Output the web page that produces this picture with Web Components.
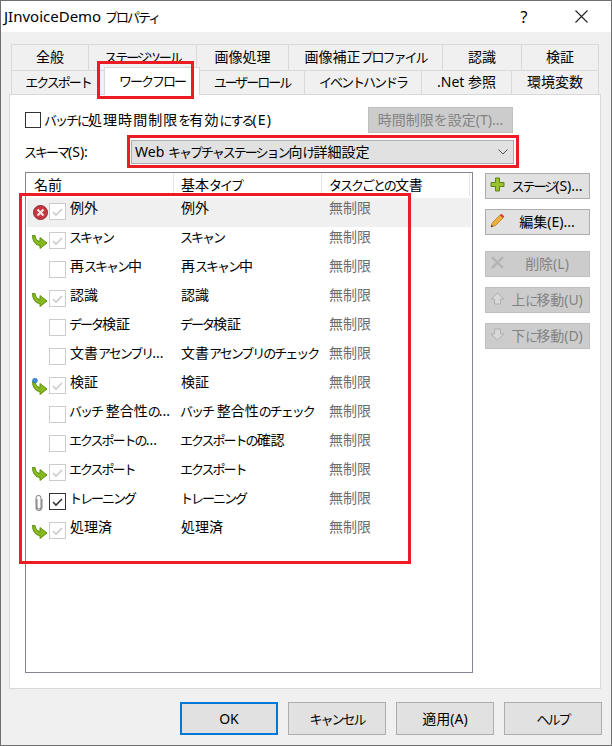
<!DOCTYPE html>
<html lang="ja">
<head>
<meta charset="utf-8">
<title>JInvoiceDemo プロパティ</title>
<style>
  html, body { margin: 0; padding: 0; background: #f0f0f0; }
  body { font: 14px/18px "Noto Sans", "Noto Sans CJK JP", sans-serif; color: #000; }
</style>
</head>
<body>
<workflow-dialog></workflow-dialog>

<script>
// the kana of the reference font are narrow, 11px each
const k = s => s.replace(/[\u3040-\u30FF]+/g, m => `<span style="font-size:13px;letter-spacing:-2px">${m}</span>`);
const startsKana = s => /^[\u30A0-\u30FF]/.test(s);

const ICONS = {
  arrow: `<svg width="16" height="15" viewBox="0 0 16 15"><path d="M.5 .5 H3 C3.5 4 5 6 8 6.5 V2.5 L15 8 L8 13.5 V10.5 C3.5 10.5 .5 6 .5 .5 Z" fill="#86b820" stroke="#5f8f14" stroke-width="1"/></svg>`,
  arrowBlue: `<svg width="16" height="18" viewBox="0 0 16 18"><path d="M.5 3.5 H3 C3.5 7 5 9 8 9.5 V5.5 L15 11 L8 16.5 V13.5 C3.5 13.5 .5 9 .5 3.5 Z" fill="#86b820" stroke="#5f8f14" stroke-width="1"/><circle cx="3" cy="2.6" r="2.4" fill="#3d8fdc" stroke="#2567a8" stroke-width=".6"/></svg>`,
  error: `<svg width="15" height="15" viewBox="0 0 15 15"><circle cx="7.5" cy="7.5" r="7" fill="#c9363e" stroke="#8d2a30"/><path d="M4.5 4.5 L10.5 10.5 M10.5 4.5 L4.5 10.5" stroke="#f4e4e4" stroke-width="2.2"/></svg>`,
  clip: `<svg width="8" height="16" viewBox="0 0 8 16"><path d="M2 4 V12 A2 2 0 0 0 6 12 V3 A2.5 2.5 0 0 0 1 3 M1 3 V12.5 A3 3 0 0 0 7 12.5 V4" fill="none" stroke="#8f8f8f" stroke-width="1.1"/></svg>`,
  plus: `<svg width="15" height="15" viewBox="0 0 15 15"><path d="M5.5 1 H9.5 V5.5 H14 V9.5 H9.5 V14 H5.5 V9.5 H1 V5.5 H5.5 Z" fill="#9ac22e" stroke="#5b8418"/></svg>`,
  pencil: `<svg width="15" height="15" viewBox="0 0 15 15"><path d="M1 14 L2.5 9.5 L10 2 L13 5 L5.5 12.5 Z" fill="#f0b040" stroke="#b87a1c" stroke-width=".8"/><path d="M10 2 L11.5 .7 L14.3 3.5 L13 5 Z" fill="#d8323a"/><path d="M1 14 L1.7 11.8 L3.2 13.3 Z" fill="#333"/></svg>`,
  cross: `<svg width="13" height="13" viewBox="0 0 13 13"><path d="M1 1 L12 12 M12 1 L1 12" stroke="#b4b4b4" stroke-width="2.4"/></svg>`,
  up: `<svg width="15" height="13" viewBox="0 0 15 13"><path d="M7.5 1 L14 7 H10.5 V12 H4.5 V7 H1 Z" fill="#d8d8d8" stroke="#b0b0b0"/></svg>`,
  down: `<svg width="15" height="13" viewBox="0 0 15 13"><path d="M4.5 1 H10.5 V6 H14 L7.5 12 L1 6 H4.5 Z" fill="#d8d8d8" stroke="#b0b0b0"/></svg>`
};

// tabs, two rows. attribute w = width of the tab in pixels
class DialogTab extends HTMLElement {
  constructor() {
    super();
    this.attachShadow({mode: "open"}).innerHTML = `
      <style>
        :host {
          display: flex;
          align-items: center;
          justify-content: center;
          box-sizing: border-box;
          height: 100%;
          padding-bottom: 2px;
          background: #f0f0f0;
          border: 1px solid #d9d9d9;
          border-left-width: 0;
          border-bottom-width: 0;
          white-space: nowrap;
        }
        :host([first]) { border-left-width: 1px; }
        :host([active]) {
          background: #fff;
          height: 28px;
          margin-top: -3px;
          margin-bottom: -1px;
          position: relative;
          z-index: 1;
          border-left-width: 1px;
          margin-left: -1px;
        }
      </style>
      <slot></slot>`;
  }
  connectedCallback() {
    this.style.width = this.getAttribute("w") + "px";
  }
}
customElements.define("dialog-tab", DialogTab);

class PushButton extends HTMLElement {
  constructor() {
    super();
    this.attachShadow({mode: "open"}).innerHTML = `
      <style>
        :host {
          display: flex;
          align-items: center;
          box-sizing: border-box;
          height: 26px;
          background: #e1e1e1;
          border: 1px solid #adadad;
          white-space: nowrap;
        }
        :host([disabled]) { background: #cccccc; border-color: #bfbfbf; color: #838383; }
        :host([default]) { border: 2px solid #0078d7; }
        .icon { flex: none; display: flex; }
        :host([iconic]) .icon { width: 15px; margin-left: 4px; justify-content: center; }
        .text { flex: 1; text-align: center; }
      </style>
      <span class="icon"><slot name="icon"></slot></span>
      <span class="text"><slot></slot></span>`;
  }
}
customElements.define("push-button", PushButton);

class CheckMark extends HTMLElement {
  constructor() {
    super();
    const on = this.hasAttribute("on");
    this.attachShadow({mode: "open"}).innerHTML = `
      <style>
        :host {
          display: block;
          box-sizing: border-box;
          width: 17px;
          height: 17px;
          flex: none;
          background: #fff;
          border: 1px solid #cccccc;
        }
        :host([dark]) { border-color: #333; }
        svg { display: block; }
      </style>
      ${on ? `<svg width="15" height="15" viewBox="0 0 15 15"><path d="M3 8 L6 11 L12 5" fill="none" stroke="${this.hasAttribute("dark") ? "#333" : "#cccccc"}" stroke-width="1.6"/></svg>` : ""}`;
  }
}
customElements.define("check-mark", CheckMark);

class StageRow extends HTMLElement {
  constructor() {
    super();
    this.attachShadow({mode: "open"});
  }
  set stage(s) {
    const shift = {arrow: 2, arrowBlue: 1, error: 0, clip: 1}[s.icon] || 0;
    const nudge = startsKana(s.name) ? 1 : 0;
    this.shadowRoot.innerHTML = `
      <style>
        :host {
          display: grid;
          grid-template-columns: 147px 148px 1fr;
          height: 29px;
          white-space: nowrap;
        }
        :host([selected]) { background: #f0f0f0; }
        .name { display: flex; align-items: center; padding-left: 4px; }
        .icon { width: 18px; height: 100%; flex: none; display: flex; align-items: center; justify-content: center; }
        .icon svg { display: block; margin-top: ${shift}px; margin-right: ${s.icon === "clip" ? 2 : 0}px; }
        .label { margin-left: ${4 - nudge}px; margin-top: -9px; }
        .cell { padding-left: ${7 - nudge}px; margin-top: 1px; }
        .count { padding-left: 7px; margin-top: 1px; color: #6d6d6d; }
        check-mark { margin-bottom: 2px; }
      </style>
      <div class="name">
        <span class="icon">${s.icon ? ICONS[s.icon] : ""}</span>
        <check-mark ${s.check ? "on" : ""} ${s.dark ? "dark" : ""}></check-mark>
        <span class="label">${k(s.name)}</span>
      </div>
      <div class="cell">${k(s.type)}</div>
      <div class="count">無制限</div>`;
  }
}
customElements.define("stage-row", StageRow);

class StageList extends HTMLElement {
  constructor() {
    super();
    this.attachShadow({mode: "open"}).innerHTML = `
      <style>
        :host {
          display: block;
          box-sizing: border-box;
          width: 448px;
          height: 501px;
          background: #fff;
          border: 1px solid #828790;
          padding: 0 1px;
        }
        .head {
          display: grid;
          grid-template-columns: 147px 148px 148px;
          height: 25px;
          white-space: nowrap;
        }
        .head div { border-right: 1px solid #e5e5e5; height: 23px; line-height: 23px; padding-left: 7px; box-sizing: border-box; }
      </style>
      <div class="head"><div>名前</div><div>${k("基本タイプ")}</div><div>${k("タスクごとの文書")}</div></div>
      <slot></slot>`;
  }
}
customElements.define("stage-list", StageList);

class RedMark extends HTMLElement {
  constructor() {
    super();
    this.attachShadow({mode: "open"}).innerHTML = `
      <style>
        :host {
          display: block;
          position: absolute;
          box-sizing: border-box;
          border: 3px solid #ed1c24;
          z-index: 5;
        }
      </style>`;
  }
}
customElements.define("red-mark", RedMark);

const STAGES = [
  {name: "例外", type: "例外", icon: "error", check: true, selected: true},
  {name: "スキャン", type: "スキャン", icon: "arrow", check: true},
  {name: "再スキャン中", type: "再スキャン中"},
  {name: "認識", type: "認識", icon: "arrow", check: true},
  {name: "データ検証", type: "データ検証"},
  {name: "文書アセンブリ...", type: "文書アセンブリのチェック"},
  {name: "検証", type: "検証", icon: "arrowBlue", check: true},
  {name: "バッチ 整合性の...", type: "バッチ 整合性のチェック"},
  {name: "エクスポートの...", type: "エクスポートの確認"},
  {name: "エクスポート", type: "エクスポート", icon: "arrow", check: true},
  {name: "トレーニング", type: "トレーニング", icon: "clip", check: true, dark: true},
  {name: "処理済", type: "処理済", icon: "arrow", check: true}
];

class WorkflowDialog extends HTMLElement {
  constructor() {
    super();
    this.attachShadow({mode: "open"}).innerHTML = `
      <style>
        :host {
          display: flex;
          flex-direction: column;
          position: relative;
          box-sizing: border-box;
          width: 612px;
          height: 746px;
          background: #f0f0f0;
          border: 1px solid #6f6f6f;
          overflow: hidden;
        }
        .title {
          display: flex;
          align-items: center;
          height: 31px;
          flex: none;
          background: #fff;
          padding-left: 3px;
          font-size: 15px;
        }
        .title .text { flex: 1; }
        .title .help { width: 58px; font-size: 16px; text-align: center; margin-right: 5px; }
        .title .close { width: 46px; display: flex; justify-content: center; margin-right: 7px; }
        .tabs { margin: 12px 0 0 10px; flex: none; }
        .tabrow { display: flex; height: 26px; }
        .tabrow + .tabrow { height: 24px; }
        .panel {
          box-sizing: border-box;
          margin-left: 8px;
          width: 592px;
          height: 595px;
          flex: none;
          background: #fff;
          border: 1px solid #d9d9d9;
          padding: 12px 0 0 15px;
        }
        .limit { display: flex; align-items: center; height: 26px; }
        .limit .box { box-sizing: border-box; width: 16px; height: 16px; border: 1px solid #333; margin-right: 3px; flex: none; }
        .limit .grow { flex: none; width: 228px; overflow: hidden; white-space: nowrap; letter-spacing: 1.05px; }
        .limit push-button { width: 145px; margin-left: 96px; }
        .schema { display: flex; align-items: center; margin-top: 7px; height: 24px; }
        .schema .lab { width: 107px; flex: none; margin-left: -1px; }
        .combo {
          box-sizing: border-box;
          width: 383px;
          height: 24px;
          display: flex;
          align-items: center;
          justify-content: space-between;
          padding: 0 5px 0 3px;
          background: #e1e1e1;
          border: 1px solid #adadad;
        }
        .main { display: flex; margin-top: 8px; }
        .side { display: flex; flex-direction: column; margin-left: 12px; width: 105px; margin-top: 1px; }
        .side push-button { margin-bottom: 10px; }
        .side .gap { margin-top: 6px; }
        .footer { display: flex; justify-content: flex-end; gap: 10px; margin: 13px 9px 0 0; flex: none; }
        .footer push-button { width: 98px; height: 33px; }
        red-mark.a { left: 96px; top: 60px; width: 97px; height: 38px; }
        red-mark.b { left: 126px; top: 134px; width: 392px; height: 33px; }
        red-mark.c { left: 18px; top: 192px; width: 392px; height: 371px; }
      </style>
      <div class="title">
        <span class="text">JInvoiceDemo ${k("プロパティ")}</span>
        <span class="help">?</span>
        <span class="close"><svg width="13" height="13" viewBox="0 0 13 13"><path d="M.5 .5 L12.5 12.5 M12.5 .5 L.5 12.5" stroke="#222" stroke-width="1.1"/></svg></span>
      </div>
      <div class="tabs">
        <div class="tabrow">
          <dialog-tab w="78" first>全般</dialog-tab>
          <dialog-tab w="108">${k("ステージツール")}</dialog-tab>
          <dialog-tab w="92">画像処理</dialog-tab>
          <dialog-tab w="154">${k("画像補正プロファイル")}</dialog-tab>
          <dialog-tab w="79">認識</dialog-tab>
          <dialog-tab w="77">検証</dialog-tab>
        </div>
        <div class="tabrow">
          <dialog-tab w="94" first>${k("エクスポート")}</dialog-tab>
          <dialog-tab w="96" active>${k("ワークフロー")}</dialog-tab>
          <dialog-tab w="105">${k("ユーザーロール")}</dialog-tab>
          <dialog-tab w="117">${k("イベントハンドラ")}</dialog-tab>
          <dialog-tab w="90">.Net 参照</dialog-tab>
          <dialog-tab w="87">環境変数</dialog-tab>
        </div>
      </div>
      <div class="panel">
        <div class="limit">
          <span class="box"></span>
          <span class="grow">${k("バッチに処理時間制限を有効にする")}(E)</span>
          <push-button disabled>時間制限を設定(T)...</push-button>
        </div>
        <div class="schema">
          <span class="lab">${k("スキーマ")}(S):</span>
          <div class="combo">
            <span>Web ${k("キャプチャステーション向け")}詳細設定</span>
            <svg width="10" height="6" viewBox="0 0 10 6"><path d="M.5 .5 L5 5 L9.5 .5" fill="none" stroke="#555" stroke-width="1"/></svg>
          </div>
        </div>
        <div class="main">
          <stage-list id="list"></stage-list>
          <div class="side">
            <push-button iconic><span slot="icon">${ICONS.plus}</span>${k("ステージ")}(S)...</push-button>
            <push-button iconic><span slot="icon">${ICONS.pencil}</span>編集(E)...</push-button>
            <push-button iconic disabled class="gap"><span slot="icon">${ICONS.cross}</span>削除(L)</push-button>
            <push-button iconic disabled><span slot="icon">${ICONS.up}</span>${k("上に移動")}(U)</push-button>
            <push-button iconic disabled><span slot="icon">${ICONS.down}</span>${k("下に移動")}(D)</push-button>
          </div>
        </div>
      </div>
      <div class="footer">
        <push-button default>OK</push-button>
        <push-button>${k("キャンセル")}</push-button>
        <push-button>適用(A)</push-button>
        <push-button>${k("ヘルプ")}</push-button>
      </div>
      <red-mark class="a"></red-mark>
      <red-mark class="b"></red-mark>
      <red-mark class="c"></red-mark>`;
  }
  connectedCallback() {
    const list = this.shadowRoot.getElementById("list");
    STAGES.forEach(s => {
      const row = document.createElement("stage-row");
      if (s.selected) row.setAttribute("selected", "");
      row.stage = s;
      list.appendChild(row);
    });
  }
}
customElements.define("workflow-dialog", WorkflowDialog);
</script>
</body>
</html>
